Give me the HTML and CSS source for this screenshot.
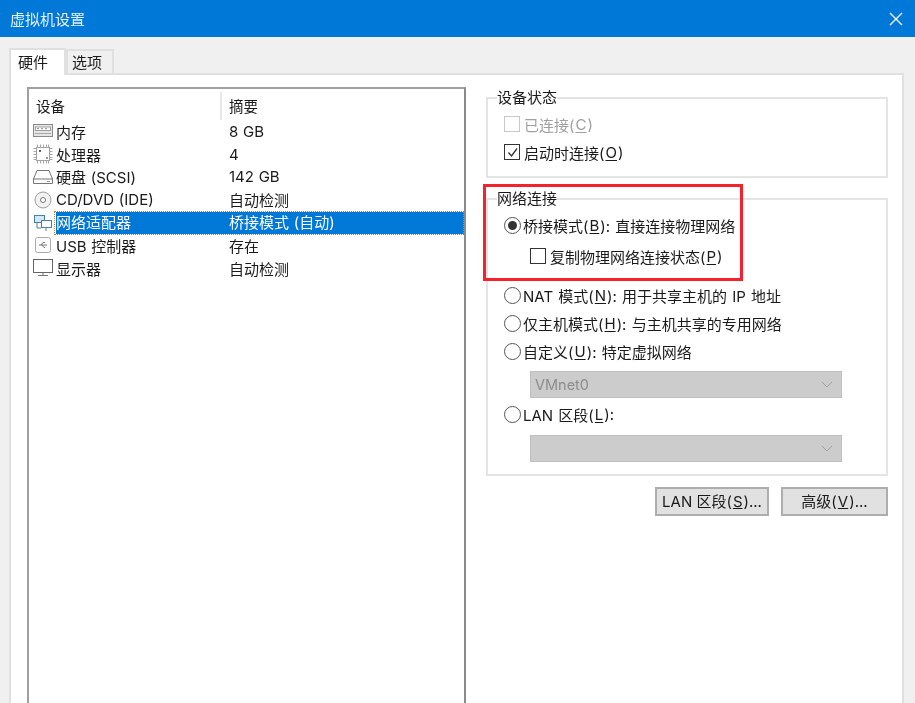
FILE: index.html
```html
<!DOCTYPE html>
<html lang="zh">
<head>
<meta charset="utf-8">
<title>虚拟机设置</title>
<link rel="stylesheet" href="styles.css">
</head>
<body>
<div class="window">
  <header class="titlebar">
    <span class="title">虚拟机设置</span>
    <svg class="close" width="14" height="14" viewBox="0 0 14 14"><path d="M1 1L13 13M13 1L1 13" stroke="#fff" stroke-width="1.3" fill="none"/></svg>
  </header>
  <div class="tabs">
    <div class="tab active">硬件</div>
    <div class="tab">选项</div>
  </div>
  <main class="panel">
    <section class="list">
      <div class="list-head">
        <div class="col-a">设备</div>
        <div class="col-b">摘要</div>
      </div>
      <div class="row">
        <svg class="ico" width="20" height="14" viewBox="0 0 20 14"><rect x=".5" y=".5" width="19" height="12" fill="#e6e6e6" stroke="#8a8a8a"/><rect x="2.500" y="3" width="15" height="3.500" fill="#fff" stroke="#a0a0a0"/><path d="M4 4.700h2M8 4.700h2M12 4.700h2" stroke="#888"/><path d="M2 9.500H18" stroke="#aaa"/></svg>
        <span class="name">内存</span><span class="val">8 GB</span>
      </div>
      <div class="row">
        <svg class="ico" width="20" height="20" viewBox="0 0 20 20"><rect x="3.500" y="3.500" width="13" height="13" fill="#fff" stroke="#a0a0a0"/><path d="M4.500 .5v3M7.500 .5v3M10.500 .5v3M13.500 .5v3M15.500 .5v3M4.500 16.500v3M7.500 16.500v3M10.500 16.500v3M13.500 16.500v3M15.500 16.500v3M.5 4.500h3M.5 7.500h3M.5 10.500h3M.5 13.500h3M.5 15.500h3M16.500 4.500h3M16.500 7.500h3M16.500 10.500h3M16.500 13.500h3M16.500 15.500h3" stroke="#a8a8a8"/><rect x="6" y="6" width="2" height="2" fill="#666"/><rect x="13" y="13" width="2" height="2" fill="#999"/></svg>
        <span class="name">处理器</span><span class="val">4</span>
      </div>
      <div class="row">
        <svg class="ico" width="20" height="16" viewBox="0 0 20 16"><path d="M4 1.500H16L19.500 10V14.500H.5V10Z M.5 10H19.500" fill="#fff" stroke="#777"/><path d="M14 12.500H17" stroke="#999"/></svg>
        <span class="name">硬盘 (SCSI)</span><span class="val">142 GB</span>
      </div>
      <div class="row">
        <svg class="ico" width="20" height="18" viewBox="0 0 20 18"><circle cx="10" cy="9" r="8" fill="#f2f2f2" stroke="#a0a0a0"/><circle cx="10" cy="9" r="2.500" fill="#fff" stroke="#777"/></svg>
        <span class="name">CD/DVD (IDE)</span><span class="val">自动检测</span>
      </div>
      <div class="row selected">
        <svg class="ico" width="20" height="18" viewBox="0 0 20 18"><rect x="1.500" y="1.500" width="10" height="7" fill="#cfe8fa" stroke="#4a7fa8"/><rect x="8.500" y="6.500" width="10" height="7" fill="#fff" stroke="#4a7fa8"/><path d="M4 9v5h4M13 14v3" stroke="#4a7fa8" fill="none"/></svg>
        <span class="name">网络适配器</span><span class="val">桥接模式 (自动)</span>
      </div>
      <div class="row">
        <svg class="ico" width="20" height="18" viewBox="0 0 20 18"><rect x="2.500" y="1.500" width="15" height="15" rx="2" fill="#fbfbfb" stroke="#aaa"/><path d="M6 9H14M8 9L10 6.500H12M9 9L11 11.500H12" stroke="#777" fill="none"/></svg>
        <span class="name">USB 控制器</span><span class="val">存在</span>
      </div>
      <div class="row">
        <svg class="ico" width="20" height="18" viewBox="0 0 20 18"><rect x=".5" y=".5" width="19" height="13" fill="#fff" stroke="#666"/><path d="M5 16.500H15M10 14v2" stroke="#777"/></svg>
        <span class="name">显示器</span><span class="val">自动检测</span>
      </div>
    </section>
    <div class="side">
      <fieldset class="group status">
        <legend>设备状态</legend>
        <label class="opt disabled first"><span class="check"></span>已连接(<u>C</u>)</label>
        <label class="opt"><span class="check on"><svg width="13" height="13" viewBox="0 0 13 13"><path d="M2.500 6.500L5.500 10L11 2.500" stroke="#333" stroke-width="1.300" fill="none"/></svg></span>启动时连接(<u>O</u>)</label>
      </fieldset>
      <fieldset class="group network">
        <legend>网络连接</legend>
        <label class="opt first"><span class="radio on"></span>桥接模式(<u>B</u>): 直接连接物理网络</label>
        <label class="opt sub"><span class="check"></span>复制物理网络连接状态(<u>P</u>)</label>
        <label class="opt nat"><span class="radio"></span>NAT 模式(<u>N</u>): 用于共享主机的 IP 地址</label>
        <label class="opt"><span class="radio"></span>仅主机模式(<u>H</u>): 与主机共享的专用网络</label>
        <label class="opt"><span class="radio"></span>自定义(<u>U</u>): 特定虚拟网络</label>
        <div class="select">VMnet0<svg class="chev" width="12" height="7" viewBox="0 0 12 7"><path d="M1 1L6 6L11 1" stroke="#a0a0a0" fill="none"/></svg></div>
        <label class="opt lan"><span class="radio"></span>LAN 区段(<u>L</u>):</label>
        <div class="select second"><svg class="chev" width="12" height="7" viewBox="0 0 12 7"><path d="M1 1L6 6L11 1" stroke="#a0a0a0" fill="none"/></svg></div>
      </fieldset>
      <div class="buttons">
        <button class="btn wide">LAN 区段(<u>S</u>)...</button>
        <button class="btn">高级(<u>V</u>)...</button>
      </div>
    </div>
    <div class="callout"></div>
  </main>
</div>
</body>
</html>
```
FILE: styles.css
```css
* { box-sizing: border-box; }
html, body { margin: 0; height: 100%; overflow: hidden; }
body {
  background: #f0f0f0;
  font-family: Inter, "Noto Sans CJK SC", "Noto Sans", sans-serif;
  font-size: 15px;
  color: #1a1a1a;
}
.window { height: 703px; display: flex; flex-direction: column; filter: blur(.35px); }
.titlebar {
  height: 37px;
  background: #0078d7;
  color: #e6f2fb;
  display: flex;
  align-items: center;
  justify-content: space-between;
  padding: 0 12px 0 10px;
  flex: none;
}
.title { font-size: 15px; }
.tabs {
  display: flex;
  align-items: flex-end;
  height: 36px;
  padding-left: 9px;
  flex: none;
}
.tab {
  width: 48px;
  height: 24px;
  background: #f0f0f0;
  border: 2px solid #e0e0e0;
  border-bottom: 0;
  padding: 0 9px 2px 3px;
  display: flex;
  align-items: center;
  justify-content: center;
  font-size: 15px;
}
.tab.active {
  width: 57px;
  height: 27px;
  background: #fff;
  margin-bottom: -2px;
  position: relative;
  z-index: 1;
  padding: 0 9px 3px 0;
}
.panel {
  position: relative;
  flex: 1;
  margin: 0 11px 0 9px;
  background: #fff;
  border: 2px solid #e0e0e0;
  border-bottom: 0;
  padding: 12px 13px 0 16px;
  display: flex;
  gap: 20px;
  min-height: 0;
}
.list {
  width: 439px;
  border: 2px solid #a0a0a0;
  border-right-color: #8a8a8a;
  border-bottom: 0;
  background: #fff;
  padding: 3px 0 0 0;
  flex: none;
}
.list-head {
  display: flex;
  height: 28px;
  padding-left: 7px;
  font-size: 14.500px;
  line-height: 29px;
}
.col-a { width: 186px; border-right: 2px solid #e8e8e8; }
.col-b { padding-left: 7px; }
.row {
  position: relative;
  display: flex;
  align-items: center;
  height: 22.800px;
  padding-left: 4px;
  white-space: nowrap;
  word-spacing: .5px;
}
.ico { width: 20px; flex: none; }
.name { width: 173px; margin-left: 3px; flex: none; }
.val { flex: 1; }
.selected .name,
.selected .val {
  color: #fff;
  background: #0078d7;
  height: 22px;
  line-height: 22px;
}
.selected::after {
  content: "";
  position: absolute;
  left: 25px;
  right: 0;
  top: 0;
  height: 22px;
  border: 1px dotted #b98a3e;
}
.side { width: 402px; flex: none; }
.group {
  margin: 0;
  border: 2px solid #e4e4e4;
  padding: 0 0 0 16px;
  min-width: 0;
}
.group legend { padding: 0; margin-left: -7px; line-height: 20px; font-size: 15px; }
.status { height: 90px; margin-top: 1px; }
.network { height: 287px; margin-top: 11px; }
.opt {
  display: flex;
  align-items: center;
  height: 28px;
  white-space: pre;
  font-size: 15px;
  word-spacing: 1px;
}
.opt.first { margin-top: 2px; }
.opt u { text-underline-offset: 2px; margin: 0 1px; }
.disabled { color: #a0a0a0; }
.sub { padding-left: 26px; height: 34px; }
.nat { margin-top: 8px; }
.lan { margin-top: 2px; }
.check {
  width: 16px;
  height: 16px;
  border: 1px solid #333;
  background: #fff;
  margin-right: 4px;
  flex: none;
  display: flex;
  align-items: center;
  justify-content: center;
}
.disabled .check { border-color: #c8c8c8; }
.radio {
  width: 17px;
  height: 17px;
  border: 1.500px solid #555;
  border-radius: 50%;
  margin-right: 2px;
  flex: none;
  display: flex;
  align-items: center;
  justify-content: center;
}
.radio.on::after {
  content: "";
  width: 9px;
  height: 9px;
  border-radius: 50%;
  background: #333;
}
.select {
  width: 312px;
  height: 27px;
  margin: 6px 0 0 26px;
  background: #cccccc;
  color: #8c8c8c;
  border: 1px solid #c0c0c0;
  display: flex;
  align-items: center;
  justify-content: space-between;
  padding: 0 8px 0 4px;
  font-size: 14.500px;
}
.select.second { justify-content: flex-end; margin-top: 7px; }
.buttons { display: flex; justify-content: flex-end; gap: 12px; margin-top: 11px; }
.btn {
  width: 107px;
  height: 29px;
  background: #e1e1e1;
  border: 2px solid #adadad;
  font: inherit;
  font-size: 15px;
  color: #1a1a1a;
  padding: 0;
  line-height: 1;
}
.btn u { margin: 0 1px; }
.btn.wide { width: 114px; }
.callout {
  position: absolute;
  left: 472px;
  top: 109px;
  width: 260px;
  height: 97px;
  border: 3px solid #f5222d;
  pointer-events: none;
}
```
